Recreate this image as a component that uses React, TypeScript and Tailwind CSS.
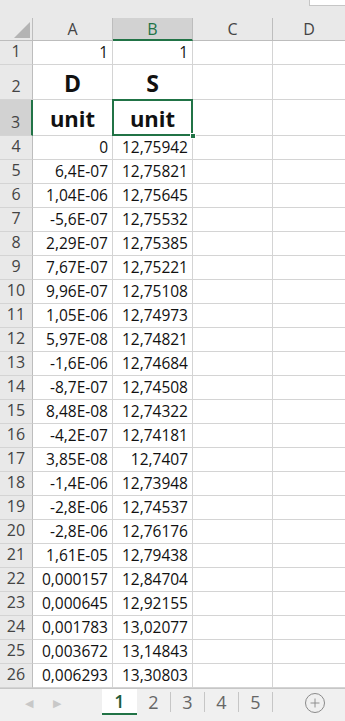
import { Plus } from "lucide-react";

const rows: [string, string][] = [
  ["0", "12,75942"],
  ["6,4E-07", "12,75821"],
  ["1,04E-06", "12,75645"],
  ["-5,6E-07", "12,75532"],
  ["2,29E-07", "12,75385"],
  ["7,67E-07", "12,75221"],
  ["9,96E-07", "12,75108"],
  ["1,05E-06", "12,74973"],
  ["5,97E-08", "12,74821"],
  ["-1,6E-06", "12,74684"],
  ["-8,7E-07", "12,74508"],
  ["8,48E-08", "12,74322"],
  ["-4,2E-07", "12,74181"],
  ["3,85E-08", "12,7407"],
  ["-1,4E-06", "12,73948"],
  ["-2,8E-06", "12,74537"],
  ["-2,8E-06", "12,76176"],
  ["1,61E-05", "12,79438"],
  ["0,000157", "12,84704"],
  ["0,000645", "12,92155"],
  ["0,001783", "13,02077"],
  ["0,003672", "13,14843"],
  ["0,006293", "13,30803"],
];

const font = { fontFamily: '"Open Sans", sans-serif' };

function RowHead({ n, selected }: { n: number; selected?: boolean }) {
  return (
    <div
      className={
        "flex w-[33px] shrink-0 items-end justify-center border-b border-[#d4d4d4] pb-[1px] text-[16px] text-[#444] " +
        (selected ? "border-r-2 border-r-[#217346] bg-[#d2d2d2]" : "border-r border-r-[#bdbdbd] bg-[#e9e9e9]")
      }
    >
      {n}
    </div>
  );
}

function Cell({ children, className = "" }: { children?: React.ReactNode; className?: string }) {
  return (
    <div className={"flex w-[80px] shrink-0 border-r border-b border-[#d4d4d4] " + className}>{children}</div>
  );
}

export default function App() {
  return (
    <div className="h-[721px] w-[345px] overflow-hidden bg-white text-[#111]" style={font}>
      {/* top strip */}
      <div className="relative h-[18px] bg-[#e9e9e9]">
        <div className="absolute top-0 right-0 h-[6px] w-[36px] border-b border-l border-[#c6c6c6] bg-white" />
      </div>

      {/* column header */}
      <div className="flex h-[23px] bg-[#e9e9e9] text-[16px] text-[#444]">
        <div className="flex w-[33px] shrink-0 items-end justify-end border-r border-b border-[#bdbdbd] p-[2px]">
          <svg width="16" height="16" viewBox="0 0 16 16">
            <path d="M16 0 L16 16 L0 16 Z" fill="#b4b4b4" />
          </svg>
        </div>
        <div className="flex w-[80px] shrink-0 items-center justify-center border-r border-b border-[#bdbdbd]">A</div>
        <div className="flex w-[80px] shrink-0 items-center justify-center border-r border-r-[#bdbdbd] border-b-2 border-b-[#217346] bg-[#d2d2d2] text-[#217346]">
          B
        </div>
        <div className="flex w-[80px] shrink-0 items-center justify-center border-r border-b border-[#bdbdbd]">C</div>
        <div className="flex flex-1 items-center justify-center border-b border-[#bdbdbd]">D</div>
      </div>

      {/* row 1 */}
      <div className="flex h-[24px] text-[15.5px]">
        <RowHead n={1} />
        <Cell className="items-end justify-end px-[4px]">1</Cell>
        <Cell className="items-end justify-end px-[4px]">1</Cell>
        <Cell />
        <div className="flex-1 border-b border-[#d4d4d4]" />
      </div>

      {/* row 2 */}
      <div className="flex h-[35px]">
        <RowHead n={2} />
        <Cell className="items-end justify-center text-[23px] leading-[32px] font-bold">D</Cell>
        <Cell className="items-end justify-center text-[23px] leading-[32px] font-bold">S</Cell>
        <Cell />
        <div className="flex-1 border-b border-[#d4d4d4]" />
      </div>

      {/* row 3 */}
      <div className="flex h-[36px]">
        <RowHead n={3} selected />
        <Cell className="items-end justify-center text-[22px] leading-[33px] font-bold">unit</Cell>
        <Cell className="relative items-end justify-center text-[22px] leading-[33px] font-bold">
          unit
          <div className="absolute -top-px -left-px -right-px -bottom-px border-2 border-[#217346]" />
          <div className="absolute -right-[4px] -bottom-[4px] h-[6px] w-[6px] border border-white bg-[#217346]" />
        </Cell>
        <Cell />
        <div className="flex-1 border-b border-[#d4d4d4]" />
      </div>

      {rows.map(([a, b], i) => (
        <div key={i} className="flex h-[24px] text-[15.5px]">
          <RowHead n={i + 4} />
          <Cell className="items-end justify-end px-[4px]">{a}</Cell>
          <Cell className="items-end justify-end px-[4px]">{b}</Cell>
          <Cell />
          <div className="flex-1 border-b border-[#d4d4d4]" />
        </div>
      ))}

      {/* sheet tabs */}
      <div className="flex h-[33px] border-t border-[#c6c6c6] bg-[#f0f0f0]">
        <div className="flex w-[102px] items-center gap-[20px] pl-[25px] pb-[4px] text-[11px] text-[#c8c8c8]">
          <span>◀</span>
          <span>▶</span>
        </div>
        <div className="flex h-[26px] w-[35px] items-center justify-center border-b-2 border-[#217346] bg-white text-[18px] font-semibold text-[#1e5c3a]">
          1
        </div>
        {["2", "3", "4", "5"].map((t) => (
          <div key={t} className="my-[3px] flex h-[20px] w-[34px] items-center justify-center border-r border-[#c6c6c6] text-[18px] text-[#666]">
            {t}
          </div>
        ))}
        <div className="flex flex-1 items-center justify-end pr-[20px] pb-[4px]">
          <div className="flex h-[20px] w-[20px] items-center justify-center rounded-full border-[1.5px] border-[#8a8a8a]">
            <Plus size={14} strokeWidth={1.6} color="#8a8a8a" />
          </div>
        </div>
      </div>
    </div>
  );
}
